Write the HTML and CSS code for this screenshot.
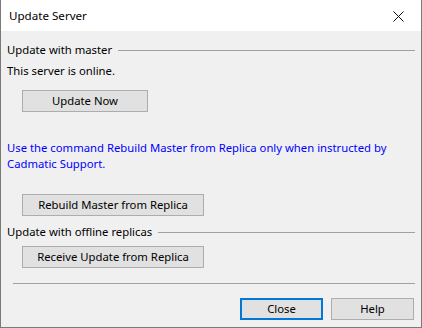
FILE: index.html
```html
<!DOCTYPE html>
<html>
<head>
<meta charset="utf-8">
<link rel="stylesheet" href="styles.css">
</head>
<body>
<div class="window">
  <div class="titlebar">
    <span class="title">Update Server</span>
    <span class="close-x">
      <svg width="11" height="11" viewBox="0 0 11 11"><path d="M0.5 0.5 L10.5 10.5 M10.5 0.5 L0.5 10.5" stroke="#111" stroke-width="1" fill="none"/></svg>
    </span>
  </div>
  <div class="content">
    <div class="group g1"><span>Update with master</span><i class="rule"></i></div>
    <div class="status">This server is online.</div>
    <button class="btn b-update">Update Now</button>
    <p class="note">Use the command Rebuild Master from Replica only when instructed by<br>Cadmatic Support.</p>
    <button class="btn b-wide b-rebuild">Rebuild Master from Replica</button>
    <div class="group g2"><span>Update with offline replicas</span><i class="rule"></i></div>
    <button class="btn b-wide b-receive">Receive Update from Replica</button>
    <div class="sep"></div>
    <div class="footer">
      <button class="btn b-foot b-default">Close</button>
      <button class="btn b-foot">Help</button>
    </div>
  </div>
</div>
</body>
</html>
```
FILE: styles.css
```css
html, body { margin: 0; padding: 0; background: #f0f0f0; }
body { font-family: "Noto Sans", "Open Sans", sans-serif; font-size: 11.3px; color: #000; }
.window {
  width: 420px; height: 327px;
  border: 1px solid #7a7a7a; border-top: none;
  background: #f0f0f0;
  display: flex; flex-direction: column;
}
.titlebar {
  height: 31px; background: #fff;
  display: flex; align-items: center; justify-content: space-between;
  padding-left: 8px;
}
.title { line-height: 16px; margin-top: 1px; font-size: 11.6px; }
.close-x { width: 46px; display: flex; justify-content: center; align-items: center; margin-top: 1px; margin-right: 0; }
.close-x svg { display: block; }
.content { padding: 0 5px 0 6px; display: flex; flex-direction: column; align-items: flex-start; }
.group { display: flex; align-items: center; width: 100%; line-height: 16px; height: 16px; }
.group .rule { flex: 1; height: 1px; background: #a0a0a0; margin-left: 6px; margin-right: 1px; }
.g1 { margin-top: 11px; }
.status { margin-top: 5px; line-height: 16px; }
.btn {
  font: inherit; color: #000; background: #e1e1e1; border: 1px solid #adadad;
  height: 22px; padding: 0; margin: 0; line-height: 18px; box-sizing: border-box;
}
.b-update { margin-top: 11px; margin-left: 15px; width: 126px; }
.note { margin: 28px 0 0; color: #0000ff; line-height: 16px; }
.b-wide { margin-left: 15px; width: 182px; }
.b-rebuild { margin-top: 22px; }
.g2 { margin-top: 8px; }
.b-receive { margin-top: 6px; }
.sep { margin: 15px 1px 0 6px; height: 1px; background: #a0a0a0; align-self: stretch; }
.footer { margin-top: 14px; align-self: stretch; display: flex; justify-content: flex-end; gap: 8px; padding-right: 2px; }
.b-foot { width: 83px; }
.b-default { border: 2px solid #0078d7; line-height: 18px; }
```
